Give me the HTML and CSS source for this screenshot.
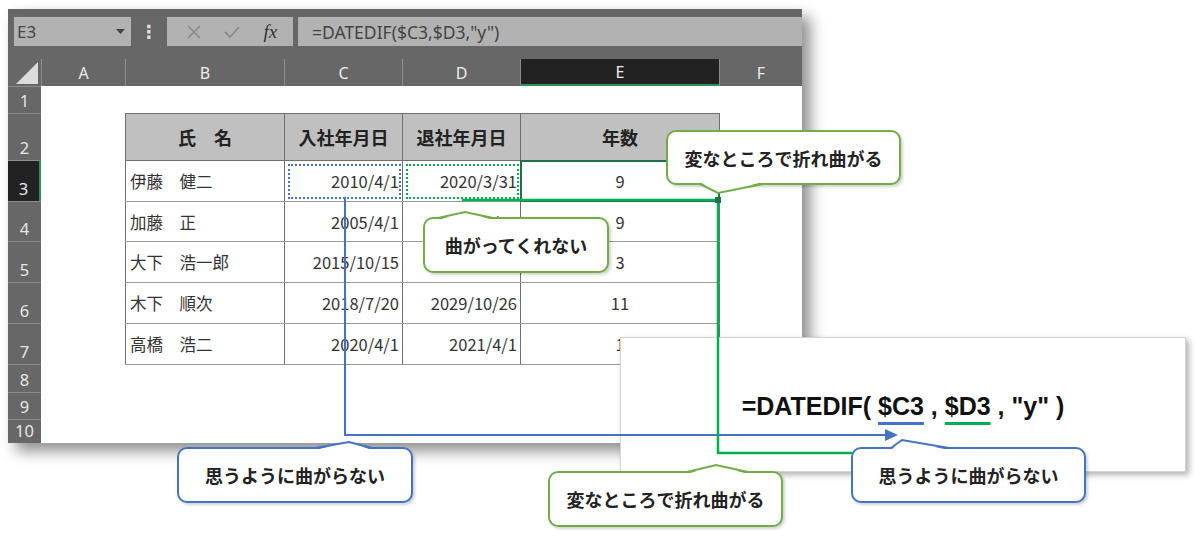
FILE: index.html
```html
<!DOCTYPE html>
<html>
<head>
  <title>DATEDIF</title>
  <link rel="stylesheet" href="styles.css">
</head>
<body>
  <div class="stage">
    <div class="excel">
      <div class="toolbar">
        <div class="namebox">
          <span>E3</span>
          <svg width="9" height="5" viewBox="0 0 9 5"><polygon points="0,0 9,0 4.5,5" fill="#444"/></svg>
        </div>
        <div class="kebab">⋮</div>
        <div class="fbtns">
          <svg width="14" height="14" viewBox="0 0 14 14"><path d="M1 1L13 13M13 1L1 13" stroke="#8a8a8a" stroke-width="1.6" fill="none"/></svg>
          <svg width="16" height="14" viewBox="0 0 16 14"><path d="M1 7L6 12L15 2" stroke="#8a8a8a" stroke-width="1.8" fill="none"/></svg>
          <span class="fx">fx</span>
        </div>
        <div class="fbox">=DATEDIF($C3,$D3,"y")</div>
      </div>

      <div class="sheet">
        <div class="corner"></div>
        <div class="colheads">
          <div style="width:84px">A</div>
          <div style="width:159px">B</div>
          <div style="width:118px">C</div>
          <div style="width:118px">D</div>
          <div class="sel" style="width:199px">E</div>
          <div style="width:83px">F</div>
        </div>
        <div class="rowheads">
          <div style="height:27px">1</div>
          <div style="height:47px">2</div>
          <div class="sel" style="height:41px">3</div>
          <div style="height:40px">4</div>
          <div style="height:41px">5</div>
          <div style="height:41px">6</div>
          <div style="height:41px">7</div>
          <div style="height:28px">8</div>
          <div style="height:27px">9</div>
          <div style="height:24px">10</div>
        </div>
        <div class="cells">
          <table class="staff">
            <colgroup>
              <col style="width:159px"><col style="width:118px"><col style="width:118px"><col style="width:199px">
            </colgroup>
            <tr class="head"><th>氏　名</th><th>入社年月日</th><th>退社年月日</th><th>年数</th></tr>
            <tr class="r41"><td>伊藤　健二</td><td class="num ant-blue">2010/4/1</td><td class="num ant-green">2020/3/31</td><td class="mid picked">9</td></tr>
            <tr class="r40"><td>加藤　正</td><td class="num">2005/4/1</td><td class="num">2014/3/31</td><td class="mid">9</td></tr>
            <tr class="r41"><td>大下　浩一郎</td><td class="num">2015/10/15</td><td class="num">2019/3/31</td><td class="mid">3</td></tr>
            <tr class="r41"><td>木下　順次</td><td class="num">2018/7/20</td><td class="num">2029/10/26</td><td class="mid">11</td></tr>
            <tr class="r41"><td>高橋　浩二</td><td class="num">2020/4/1</td><td class="num">2021/4/1</td><td class="mid">1</td></tr>
          </table>
        </div>
      </div>
    </div>

    <div class="formula">=DATEDIF( <span class="u-blue">$C3</span> , <span class="u-green">$D3</span> , "y" )</div>

    <svg class="lines" width="1200" height="537" viewBox="0 0 1200 537">
      <path d="M345 197V435H888" stroke="#4472c4" stroke-width="2" fill="none"/>
      <polygon points="885,429 898,435 885,441" fill="#4472c4"/>
      <path d="M462 200H718V453H852" stroke="#00b050" stroke-width="2.5" fill="none"/>
      <rect x="715" y="197" width="6" height="6" fill="#1e7145"/>
    </svg>

    <div class="callout green" style="left:666px;top:130px;width:235px;height:55px">
      <svg class="tail" width="235" height="55"><polygon points="34,52 52,63 97,52" fill="#fff"/><polyline points="34,54 52,63 97,54" stroke="#70ad47" stroke-width="2" fill="none"/></svg>
      変なところで折れ曲がる
    </div>
    <div class="callout green" style="left:423px;top:217px;width:186px;height:56px">
      <svg class="tail" width="186" height="56"><polygon points="15,3 42,-5 70,3" fill="#fff"/><polyline points="15,1 42,-5 70,1" stroke="#70ad47" stroke-width="2" fill="none"/></svg>
      曲がってくれない
    </div>
    <div class="callout blue" style="left:177px;top:447px;width:236px;height:56px">
      <svg class="tail" width="236" height="56"><polygon points="138,3 172,-5 195,3" fill="#fff"/><polyline points="138,1 172,-5 195,1" stroke="#4472c4" stroke-width="2" fill="none"/></svg>
      思うように曲がらない
    </div>
    <div class="callout green" style="left:548px;top:471px;width:235px;height:56px">
      <svg class="tail" width="235" height="56"><polygon points="139,3 168,-6 200,3" fill="#fff"/><polyline points="139,1 168,-6 200,1" stroke="#70ad47" stroke-width="2" fill="none"/></svg>
      変なところで折れ曲がる
    </div>
    <div class="callout blue" style="left:851px;top:447px;width:235px;height:56px">
      <svg class="tail" width="235" height="56"><polygon points="40,3 51,-7 98,3" fill="#fff"/><polyline points="40,1 51,-7 98,1" stroke="#4472c4" stroke-width="2" fill="none"/></svg>
      思うように曲がらない
    </div>
  </div>
</body>
</html>
```

FILE: styles.css
```css
* {
  box-sizing: border-box;
}

body {
  margin: 0;
  background: #fff;
  font-family: "Noto Sans CJK JP", sans-serif;
}

.stage {
  position: relative;
  width: 1200px;
  height: 537px;
  overflow: hidden;
}

/* excel window */
.excel {
  margin: 9px 0 0 8px;
  width: 794px;
  height: 434px;
  background: #676767;
  box-shadow: 8px 8px 14px rgba(0, 0, 0, 0.45);
  overflow: hidden;
}

.toolbar {
  display: flex;
  height: 50px;
  padding: 8px 0 13px 6px;
}

.namebox {
  width: 117px;
  background: #b2b2b2;
  display: flex;
  align-items: center;
  justify-content: space-between;
  padding: 0 6px 0 3px;
  font: 17px "Noto Sans", sans-serif;
  color: #444;
}

.kebab {
  width: 36px;
  color: #e0e0e0;
  font: bold 18px "DejaVu Sans", sans-serif;
  display: flex;
  align-items: center;
  justify-content: center;
}

.fbtns {
  width: 126px;
  background: #b2b2b2;
  display: flex;
  align-items: center;
  justify-content: space-around;
  padding: 0 4px 0 8px;
}

.fx {
  font: italic 19px "Liberation Serif", serif;
  color: #333;
}

.fbox {
  flex: 1;
  margin-left: 5px;
  background: #b2b2b2;
  display: flex;
  align-items: center;
  padding-left: 14px;
  font: 17.5px "Noto Sans", sans-serif;
  color: #444;
}

.sheet {
  display: grid;
  grid-template-columns: 33px 761px;
  grid-template-rows: 27px 357px;
}

.corner {
  background: #676767;
  position: relative;
}

.corner::after {
  content: "";
  position: absolute;
  left: 8px;
  top: 3px;
  width: 22px;
  height: 22px;
  background: #dcdcdc;
  clip-path: polygon(100% 0, 100% 100%, 0 100%);
}

.colheads {
  display: flex;
}

.colheads div {
  border-left: 1px solid #8c8c8c;
  display: flex;
  align-items: center;
  justify-content: center;
  font: 16px "Noto Sans", sans-serif;
  color: #ececec;
}

.colheads .sel {
  background: #222;
  border-bottom: 2px solid #2f8f5a;
}

.rowheads {
  display: flex;
  flex-direction: column;
}

.rowheads div {
  border-top: 1px solid #8c8c8c;
  display: flex;
  align-items: flex-end;
  justify-content: center;
  padding-bottom: 1px;
  font: 16.5px "Noto Sans", sans-serif;
  color: #e6e6e6;
}

.rowheads .sel {
  background: #222;
  border-right: 2px solid #2f8f5a;
}

.cells {
  background: #fff;
  padding: 27px 0 0 84px;
}

/* data table */
.staff {
  border-collapse: collapse;
  table-layout: fixed;
  width: 594px;
  color: #333;
}

.staff th,
.staff td {
  border: 1px solid #707070;
  padding: 0 4px;
  white-space: nowrap;
}

.staff th {
  height: 47px;
  background: #c0c0c0;
  font-size: 18px;
  font-weight: bold;
  color: #222;
}

.staff td {
  font-size: 16.5px;
  border-top-color: #999;
  border-bottom-color: #999;
}

.r41 td { height: 41px; }
.r40 td { height: 40px; }

.staff .num {
  text-align: right;
  padding-right: 3px;
}

.staff .mid {
  text-align: center;
}

.ant-blue,
.ant-green,
.picked {
  position: relative;
}

.ant-blue::after,
.ant-green::after {
  content: "";
  position: absolute;
  inset: 3px 1px 2px 3px;
  border: 2px dotted #4472c4;
}

.ant-green::after {
  border-color: #00b050;
}

.picked::after {
  content: "";
  position: absolute;
  inset: -1px;
  border: 2px solid #1e7145;
}

/* formula box */
.formula {
  position: absolute;
  left: 620px;
  top: 337px;
  width: 566px;
  height: 135px;
  background: #fff;
  border: 1px solid #d4d4d4;
  box-shadow: 3px 3px 6px rgba(0, 0, 0, 0.3);
  display: flex;
  align-items: center;
  justify-content: center;
  white-space: pre;
  font: bold 25px "Liberation Sans", Arial, sans-serif;
  color: #111;
  padding-top: 4px;
}

.u-blue,
.u-green {
  text-decoration: underline 3px #4472c4;
  text-underline-offset: 7px;
}

.u-green {
  text-decoration-color: #00b050;
}

.lines {
  position: absolute;
  left: 0;
  top: 0;
  pointer-events: none;
}

/* callouts */
.callout {
  position: absolute;
  background: #fff;
  border: 2px solid #70ad47;
  border-radius: 10px;
  box-shadow: 2px 2px 3px rgba(0, 0, 0, 0.18);
  display: flex;
  align-items: center;
  justify-content: center;
  font-size: 18px;
  font-weight: bold;
  color: #222;
}

.callout.blue {
  border-color: #4472c4;
}

.tail {
  position: absolute;
  left: -2px;
  top: -2px;
  overflow: visible;
}
```
